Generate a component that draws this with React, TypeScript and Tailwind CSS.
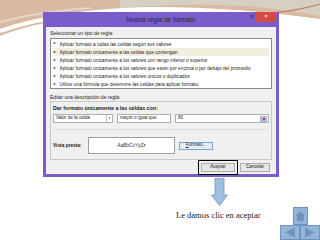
import React from 'react';

// ── Rule types shown in the list ─────────────────────────────────────────────
const RULES = [
  'Aplicar formato a todas las celdas según sus valores',
  'Aplicar formato únicamente a las celdas que contengan',
  'Aplicar formato únicamente a los valores con rango inferior o superior',
  'Aplicar formato únicamente a los valores que estén por encima o por debajo del promedio',
  'Aplicar formato únicamente a los valores únicos o duplicados',
  'Utilice una fórmula que determine las celdas para aplicar formato.',
];

const UI = { fontFamily: '"Liberation Sans", Arial, sans-serif' };

function Backdrop() {
  return (
    <svg className="absolute inset-0" width="320" height="240" viewBox="0 0 320 240">
      <path d="M0 0 H320 V20 C250 8 180 6 120 12 C70 17 30 24 0 36 Z" fill="#d8b9a2" />
      <path d="M120 0 H320 V16 C260 4 200 2 120 8 Z" fill="#d5d0c2" />
      <path d="M0 31 C40 17 100 9 160 9 C210 9 260 13 320 21" fill="none" stroke="#ffffff" strokeWidth="4" />
      <path d="M245 15 C280 13 300 10 320 4" fill="none" stroke="#bf8665" strokeWidth="1.2" />
      <path d="M0 22 C30 14 60 10 90 8" fill="none" stroke="#e6d6c6" strokeWidth="2" />
    </svg>
  );
}

function Dialog() {
  return (
    <div className="relative ml-[43px] mt-[12px] w-[236px] border-[3px] border-t-0 border-[#7b5ccc] bg-[#f0f0f0]" style={UI}>
      {/* title bar */}
      <div className="relative -mx-[3px] flex h-[15px] items-center justify-center bg-[#7b5ccc]">
        <span className="text-[6.6px] text-[#2a2a2a]">Nueva regla de formato</span>
        <span className="absolute right-[26px] top-[2px] text-[5px] font-bold text-[#2a2a2a]">?</span>
        <span className="absolute right-[3px] top-0 flex h-[10px] w-[20px] items-center justify-center bg-[#d64a44] text-[5px] font-bold text-white">×</span>
      </div>

      <div className="px-[4px] pt-[3px]">
        <div className="text-[5px] leading-[6px] text-[#222]">Seleccionar un tipo de regla:</div>
        <div className="mt-[2px] h-[51px] border border-[#8a8a8a] bg-white px-[2px] pt-[1px]">
          {RULES.map((r, i) => (
            <div
              key={r}
              className={[
                'flex h-[8.2px] items-center gap-[3px] whitespace-nowrap text-[4.8px] text-[#222]',
                i === 1 ? 'bg-[#f3efdf]' : '',
              ].join(' ')}
            >
              <span className="text-[3.5px]">►</span>
              {r}
            </div>
          ))}
        </div>

        <div className="mt-[5px] text-[5px] leading-[6px] text-[#222]">Editar una descripción de regla:</div>
        <div className="mt-[1px] h-[59px] border border-[#c8c8c8] bg-[#f0f0f0] px-[2px] pt-[3px]">
          <div className="text-[5.3px] font-bold leading-[6px] text-[#222]">Dar formato únicamente a las celdas con:</div>
          <div className="mt-[3px] flex items-center gap-[4px]">
            <div className="flex h-[9px] w-[60px] items-center justify-between border border-[#b0b0b0] bg-white pl-[2px] text-[4.6px] text-[#222]">
              Valor de la celda
              <span className="flex h-full w-[6px] items-center justify-center border-l border-[#c0c0c0] text-[3.5px]">v</span>
            </div>
            <div className="flex h-[9px] w-[54px] items-center whitespace-nowrap border border-[#b0b0b0] bg-white pl-[2px] text-[4.6px] text-[#222]">
              mayor o igual que
            </div>
            <div className="flex h-[9px] flex-1 items-center justify-between border border-[#b0b0b0] bg-white pl-[2px] text-[4.6px] text-[#222]">
              80
              <span className="mr-[1px] h-[6px] w-[7px] bg-[#a8bcd6]">
                <span className="ml-[3px] mt-[2px] block h-[2px] w-[2px] bg-[#d03030]" />
              </span>
            </div>
          </div>
          <div className="mt-[6px] h-px bg-[#cfe0f0]" />
          <div className="mt-[7px] flex items-center">
            <span className="w-[35px] text-[4.8px] font-bold text-[#222]">Vista previa:</span>
            <div className="flex h-[17px] w-[87px] items-center justify-center border border-[#a0a0a0] bg-white text-[4.8px] italic text-[#333]">
              AaBbCcYyZz
            </div>
            <div className="ml-[4px] flex h-[8px] w-[34px] items-center justify-center whitespace-nowrap border border-[#7aa7d8] bg-[#e4eef9] text-[4.5px] text-[#222]">
              <span className="underline">F</span>ormato...
            </div>
          </div>
        </div>

        <div className="flex h-[14px] items-center justify-end gap-[5px] pr-[2px]">
          <div className="flex h-[9px] w-[34px] items-center justify-center border border-[#adadad] bg-[#e6e6e6] text-[4.5px] text-[#222] outline-[1.5px] outline-offset-[2px] outline outline-black">
            Aceptar
          </div>
          <div className="flex h-[9px] w-[30px] items-center justify-center border border-[#adadad] bg-[#e6e6e6] text-[4.5px] text-[#222]">
            Cancelar
          </div>
        </div>
      </div>
    </div>
  );
}

function NavButtons() {
  return (
    <div className="absolute bottom-0 right-0 flex w-[40px] flex-col items-center">
      <div className="flex h-[18px] w-[15px] items-center justify-center border border-[#6d94bf] bg-[#94b4d8]">
        <svg width="11" height="12" viewBox="0 0 11 12">
          <path d="M5.5 1 L10.5 6 H9 V11 H2 V6 H0.5 Z" fill="#6f93bd" />
        </svg>
      </div>
      <div className="flex">
        <div className="flex h-[15px] w-[20px] items-center justify-center border border-[#6d94bf] bg-[#94b4d8]">
          <svg width="12" height="11" viewBox="0 0 12 11"><path d="M11 0.5 V10.5 L1 5.5 Z" fill="#6f93bd" /></svg>
        </div>
        <div className="flex h-[15px] w-[20px] items-center justify-center border border-[#6d94bf] bg-[#94b4d8]">
          <svg width="12" height="11" viewBox="0 0 12 11"><path d="M1 0.5 V10.5 L11 5.5 Z" fill="#6f93bd" /></svg>
        </div>
      </div>
    </div>
  );
}

export default function App() {
  return (
    <div className="relative h-[240px] w-[320px] overflow-hidden bg-white">
      <Backdrop />
      <div className="relative">
        <Dialog />
        <div className="ml-[211px] mt-[1px]">
          <svg width="17" height="28" viewBox="0 0 17 28">
            <path d="M4 0 H13 V17 H16.5 L8.5 27.5 L0.5 17 H4 Z" fill="#9dbfe0" stroke="#6e93bd" strokeWidth="0.8" />
          </svg>
        </div>
        <div className="ml-[176px] mt-[3px] text-[8.5px] leading-[12px] text-[#222]" style={{ fontFamily: '"Liberation Serif", "Times New Roman", serif' }}>
          Le damos clic en aceptar
        </div>
      </div>
      <NavButtons />
    </div>
  );
}
